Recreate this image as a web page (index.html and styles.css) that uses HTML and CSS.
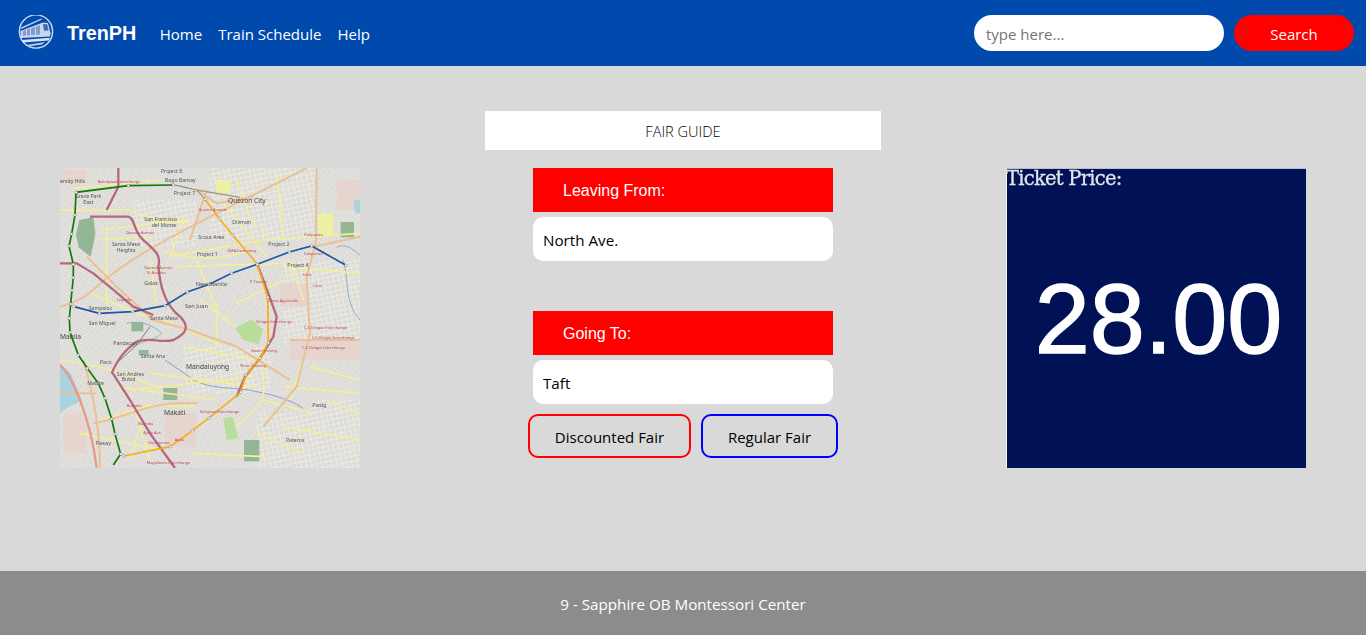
FILE: index.html
```html
<!DOCTYPE html>
<html lang="en">
<head>
<meta charset="utf-8">
<title>TrenPH</title>
<link rel="stylesheet" href="styles.css">
</head>
<body>
<header class="navbar">
  <a class="brand" href="#">
    <svg class="logo" viewBox="0 1.5 36 36" aria-hidden="true">
      <circle cx="18" cy="18" r="16.6" fill="none" stroke="#d5deee" stroke-width="1.4"/>
      <path d="M3 14 L23 5 L24 6 L3.4 15.5Z" fill="#c4d0e6"/>
      <path d="M2.6 17.5 L10 14.5 L25 9 L30 9.6 L32.6 20 L32 23 L3 24.6 Z" fill="#c9d5ea"/>
      <path d="M5 17.5 L8 16.4 V22 L5 22.3Z M9 16 L12 15 V21.7 L9 22Z M13 14.7 L17 13.3 V21.3 L13 21.6Z M18 13 L22 11.6 V21 L18 21.2Z" fill="#7f9dcd"/>
      <path d="M25 10.4 L29.2 10.7 L30.6 17 L26 17.3Z" fill="#3a6bb2"/>
      <path d="M3.6 26.4 L32 24.2 L30.6 27 L5 29Z" fill="#dbe3f1"/>
      <path d="M8 31.5 L27 28.4 L24 31 L11 33Z" fill="#b9c8e2"/>
    </svg>
    <span class="brand-name">TrenPH</span>
  </a>
  <nav class="nav-links">
    <a href="#">Home</a>
    <a href="#">Train Schedule</a>
    <a href="#">Help</a>
  </nav>
  <form class="search">
    <input class="search-input" type="text" placeholder="type here...">
    <button class="search-btn" type="button">Search</button>
  </form>
</header>

<main class="content">
  <h1 class="title">FAIR GUIDE</h1>
  <div class="columns">
    <svg class="map" viewBox="30 24 900 900" role="img" aria-label="Metro Manila train map">
      <defs>
        <pattern id="streets" width="20" height="17" patternUnits="userSpaceOnUse" patternTransform="rotate(24)">
          <rect width="20" height="17" fill="#d8d6d1"/>
          <path d="M0 4H20M0 12.5H20M6 0V17M15 0V17" stroke="#e9e8e4" stroke-width="2.4"/>
        </pattern>
        <pattern id="streets2" width="15" height="15" patternUnits="userSpaceOnUse" patternTransform="rotate(-12)">
          <rect width="15" height="15" fill="#dedcd7"/>
          <path d="M0 7.5H15M7.5 0V15" stroke="#f0efeb" stroke-width="2.2"/>
        </pattern>
      </defs>
      <rect x="30" y="24" width="900" height="900" fill="url(#streets)"/>
      <g class="m-light">
        <path d="M480 24H800V240H480Z"/><path d="M700 300H930V560H700Z"/><path d="M250 120H440V260H250Z"/>
        <path d="M400 560H660V700H400Z"/><path d="M780 720H930V924H780Z"/><path d="M620 760H780V924H620Z"/>
      </g>
      <g class="m-pink">
        <path d="M30 30H110V70H30Z"/><path d="M690 370H770V440H690Z"/><path d="M720 540H930V600H720Z"/>
        <path d="M345 760H440V860H345Z"/><path d="M40 760H110V880H40Z"/><path d="M860 60H930V150H860Z"/>
      </g>
      <g class="m-green">
        <path d="M88 180L130 172L136 222L122 290L86 262L78 224Z"/>
        <path d="M340 684H382V720H340Z"/><path d="M582 840H628V904H582Z"/><path d="M872 186H912V232H872Z"/>
        <path d="M244 486H280V514H244Z"/><path d="M266 570H296V586H266Z"/>
      </g>
      <path class="m-lgreen" d="M555 505L605 478L640 510L625 552L580 540Z"/>
      <path class="m-lgreen" d="M520 775L548 770L565 835L530 840Z"/>
      <path class="m-lime" d="M498 60H540V98H498Z"/>
      <path class="m-lime" d="M805 160H850V225H805Z"/>
      <path class="m-water" d="M30 612L62 640L96 720L50 745L30 760Z"/>
      <path class="m-water" d="M910 120H930V160H915Z"/>
      <path class="m-bluel" d="M860 262C880 250 905 262 930 286M880 300C900 380 880 420 930 480M230 490C270 480 310 495 335 520C320 540 280 540 250 560"/>
      <path class="m-bluel2" d="M345 600L440 665C500 690 560 680 620 695C680 705 730 725 760 745"/>
      <g class="m-yel">
        <path d="M30 150H240C300 180 380 190 420 185M70 85L330 60M340 270C420 305 520 300 600 270"/>
        <path d="M170 200V440M300 300L320 440M440 300L500 450M720 300L760 420M520 130L650 290"/>
        <path d="M30 600C120 610 240 640 330 690M240 690L610 650M150 780L300 735L440 740M450 420L560 500M640 200L640 240"/>
        <path d="M560 800L640 720L790 760M780 620L930 660M830 720L930 760M620 820L760 880M430 880L640 890M240 900L270 800"/>
        <path d="M150 210L410 180M150 240L300 230M360 290L640 240M640 240L930 220M380 320L700 310M700 320L930 340"/>
        <path d="M120 400L290 470M340 480L520 560M500 430L500 560M560 430L700 360M400 560L620 600M300 640L620 680"/>
        <path d="M200 680L500 720M90 820L340 870M260 760L300 900M640 560V720M700 680L930 700M700 800L930 840M760 600L720 720M400 180L360 290M560 60L610 200M680 40L700 230"/>
      </g>
      <g class="m-orange">
        <path d="M30 440C60 430 100 420 140 380C240 290 400 210 560 130C640 90 720 50 770 24"/>
        <path d="M110 290L200 380L310 480L420 510L560 560L720 660M720 540H930"/>
        <path d="M800 24L797 250L770 350L780 520L740 680L640 800"/>
        <path d="M470 90L420 240M930 230L790 260M610 110L500 130L440 90"/>
        <path d="M100 600C130 700 150 800 150 924M30 700L140 700M130 790C240 770 300 720 440 730"/>
      </g>
      <path class="m-salmon" d="M30 615C60 640 120 760 140 924"/>
      <g class="m-road">
        <path d="M30 310H80L130 340L185 385L250 440L310 465"/>
        <path d="M120 170H235C255 175 250 210 275 235C310 270 335 280 325 320C330 370 340 430 390 470C420 500 410 520 370 540C330 550 300 530 260 545C240 560 210 580 185 640"/>
        <path d="M205 24V80L170 150"/>
        <path d="M185 635L240 720L300 820L375 924"/>
        <path d="M622 313L655 400L680 470L670 530L630 595L585 650L560 710"/>
      </g>
      <path class="m-dark" d="M300 500L260 555L205 605M375 75L440 90L465 118"/>
      <path class="m-brown" d="M440 90L570 112"/>
      <path class="ln-green" d="M370 75L235 77L78 97L75 165L65 222L57 258L70 313L70 353L66 391L62 432L58 475L60 517L85 585L112 625L145 670L165 715L185 777L195 822L212 882L190 915"/>
      <path class="ln-blue" d="M72 440L148 460L248 455L345 437L412 396L478 373L545 340L622 313L718 276L785 258L888 316"/>
      <path class="ln-yellow" d="M465 118L508 176L550 227L622 313L653 412L655 548L630 595L588 645L572 697L478 773L427 812L360 860L222 888"/>
      <g class="m-stops">
        <circle cx="370" cy="75" r="4"/><circle cx="235" cy="77" r="4"/><circle cx="78" cy="97" r="4"/><circle cx="75" cy="165" r="4"/><circle cx="65" cy="222" r="4"/><circle cx="57" cy="258" r="4"/><circle cx="70" cy="313" r="4"/><circle cx="70" cy="353" r="4"/><circle cx="66" cy="391" r="4"/><circle cx="62" cy="432" r="4"/><circle cx="58" cy="475" r="4"/><circle cx="60" cy="517" r="4"/><circle cx="85" cy="585" r="4"/><circle cx="112" cy="625" r="4"/><circle cx="145" cy="670" r="4"/><circle cx="165" cy="715" r="4"/><circle cx="185" cy="777" r="4"/><circle cx="195" cy="822" r="4"/><circle cx="212" cy="882" r="4"/>
        <circle cx="72" cy="440" r="4"/><circle cx="148" cy="460" r="4"/><circle cx="248" cy="455" r="4"/><circle cx="345" cy="437" r="4"/><circle cx="412" cy="396" r="4"/><circle cx="478" cy="373" r="4"/><circle cx="545" cy="340" r="4"/><circle cx="622" cy="313" r="4"/><circle cx="718" cy="276" r="4"/><circle cx="785" cy="258" r="4"/><circle cx="888" cy="316" r="4"/>
        <circle cx="465" cy="118" r="4"/><circle cx="508" cy="176" r="4"/><circle cx="550" cy="227" r="4"/><circle cx="653" cy="412" r="4"/><circle cx="655" cy="548" r="4"/><circle cx="630" cy="595" r="4"/><circle cx="588" cy="645" r="4"/><circle cx="572" cy="697" r="4"/><circle cx="478" cy="773" r="4"/><circle cx="427" cy="812" r="4"/><circle cx="360" cy="860" r="4"/><circle cx="222" cy="888" r="4"/>
      </g>
      <g class="m-text">
        <text x="333" y="38">Project 8</text><text x="345" y="67">Bago Bantay</text><text x="372" y="104">Project 7</text>
        <text x="75" y="115">Grace Park</text><text x="100" y="131">East</text><text x="30" y="68">ersity Hills</text>
        <text x="283" y="184">San Francisco</text><text x="305" y="200">del Monte</text>
        <text x="186" y="258">Santa Mesa</text><text x="200" y="276">Heights</text>
        <text x="547" y="192">Diliman</text><text x="445" y="236">Scout Area</text><text x="655" y="258">Project 2</text>
        <text x="440" y="288">Project 1</text><text x="712" y="320">Project 4</text><text x="283" y="374">Galas</text>
        <text x="116" y="451">Sampaloc</text><text x="116" y="494">San Miguel</text><text x="190" y="554">Pandacan</text>
        <text x="150" y="611">Paco</text><text x="200" y="647">San Andres</text><text x="215" y="664">Bukid</text>
        <text x="272" y="595">Santa Ana</text><text x="112" y="674">Malate</text><text x="300" y="480">Santa Mesa</text>
        <text x="708" y="847">Pateros</text><text class="m-mid" x="437" y="378">New Manila</text>
        <text class="m-mid" x="405" y="443">San Juan</text><text class="m-mid" x="137" y="855">Pasay</text><text class="m-mid" x="787" y="741">Pasig</text>
        <text class="m-big" x="534" y="128">Quezon City</text><text class="m-big" x="408" y="626">Mandaluyong</text>
        <text class="m-big" x="342" y="766">Makati</text><text class="m-big" x="30" y="537">Manila</text>
      </g>
      <g class="m-redtext">
        <text x="143" y="68">Balintawak Interchange</text><text x="445" y="154">Quezon Avenue</text><text x="228" y="222">Quezon Avenue</text>
        <text x="532" y="276">GMA-Kamuning</text><text x="282" y="327">Quezon Avenue</text><text x="290" y="341">G. Araneta</text>
        <text x="600" y="368">P. Tuazon</text><text x="655" y="426">Camp Aguinaldo</text><text x="618" y="490">Ortigas Interchange</text>
        <text x="762" y="507">C-5 Ortigas Interchange</text><text x="785" y="536">C-5 Ortigas Interchange</text><text x="756" y="568">C-5 Ortigas Interchange</text>
        <text x="602" y="576">Shaw Crossing</text><text x="570" y="620">Shaw Crossing</text><text x="450" y="760">Kalayaan Interchange</text>
        <text x="230" y="741">Buendia</text><text x="265" y="795">Buendia</text><text x="280" y="822">Ayala Ave.</text><text x="295" y="851">Dasmarinas</text>
        <text x="290" y="912">Magallanes Interchange</text><text x="374" y="842">Ayala</text><text x="200" y="422">Legarda</text>
        <text x="763" y="228">Katipunan</text><text x="763" y="284">Katipunan</text><text x="760" y="347">Libis</text><text x="790" y="382">Libis</text>
      </g>
    </svg>

    <section class="fare-form">
      <label class="field-label">Leaving From:</label>
      <input class="field-input" type="text" value="North Ave.">
      <label class="field-label field-gap">Going To:</label>
      <input class="field-input" type="text" value="Taft">
      <div class="fare-buttons">
        <button class="fare-btn fare-discount" type="button">Discounted Fair</button>
        <button class="fare-btn fare-regular" type="button">Regular Fair</button>
      </div>
    </section>

    <section class="price">
      <div class="price-label">Ticket Price:</div>
      <div class="price-value">28.00</div>
    </section>
  </div>
</main>

<footer class="footer">9 - Sapphire OB Montessori Center</footer>
</body>
</html>
```

FILE: styles.css
```css
* { box-sizing: border-box; }

html, body { height: 100%; }

body {
  margin: 0;
  display: flex;
  flex-direction: column;
  height: 635px;
  overflow: hidden;
  font-family: "Open Sans", "Noto Sans", sans-serif;
  background: #d9d9d9;
}

/* Navbar */
.navbar {
  flex: 0 0 66px;
  display: flex;
  align-items: center;
  padding: 0 12px 0 18px;
  background: #004aad;
}

.brand {
  display: flex;
  align-items: center;
  color: #fff;
  text-decoration: none;
}

.logo { width: 36px; height: 36px; display: block; }

.brand-name {
  margin-left: 13px;
  font: bold 19.8px "Liberation Sans", Arial, sans-serif;
}

.nav-links {
  display: flex;
  gap: 16px;
  margin-left: 23.5px;
  padding-top: 2px;
}

.nav-links a {
  color: #fff;
  font-size: 15px;
  text-decoration: none;
}

.search {
  display: flex;
  gap: 10px;
  margin-left: auto;
}

.search-input {
  width: 250px;
  height: 36px;
  padding: 2px 12px 0;
  border: 0;
  border-radius: 18px;
  background: #fff;
  font: 15px "Open Sans", sans-serif;
  outline: none;
}

.search-input::placeholder { color: #757575; opacity: 1; }

.search-btn {
  width: 120px;
  height: 36px;
  padding: 1px 0 0;
  border: 0;
  border-radius: 18px;
  background: #f00;
  color: #fff;
  font: 15px "Open Sans", sans-serif;
}

/* Main */
.content {
  flex: 1;
  min-height: 0;
  padding-top: 45px;
  background: #d9d9d9;
}

.title {
  width: 396px;
  height: 39px;
  margin: 0 auto 18px;
  background: #fff;
  color: #000;
  font-size: 14.6px;
  font-weight: 300;
  line-height: 41px;
  text-align: center;
}

.columns {
  display: flex;
  justify-content: space-between;
  align-items: flex-start;
  padding: 0 60px;
}

.map {
  display: block;
  width: 300px;
  height: 300px;
  filter: blur(0.4px);
}

.m-light path { fill: url(#streets2); }
.m-pink path { fill: #e6d5cf; }
.m-green path { fill: #93b795; }
.m-lgreen { fill: #b9dd9a; }
.m-lime { fill: #eef0a2; }
.m-water { fill: #a9d3df; }
.m-bluel { fill: none; stroke: #87b3c6; stroke-width: 3; }
.m-bluel2 { fill: none; stroke: #8d9fd0; stroke-width: 3; }
.m-yel path { fill: none; stroke: #f3ee9b; stroke-width: 5; }
.m-orange path { fill: none; stroke: #e9c193; stroke-width: 6; }
.m-salmon { fill: none; stroke: #e89a88; stroke-width: 7; }
.m-road path { fill: none; stroke: #b5697a; stroke-width: 7; }
.m-dark { fill: none; stroke: #7f7f7f; stroke-width: 3; }
.m-brown { fill: none; stroke: #a99a7c; stroke-width: 4; }
.ln-green { fill: none; stroke: #0e7a08; stroke-width: 5; }
.ln-blue { fill: none; stroke: #1c57ac; stroke-width: 5; }
.ln-yellow { fill: none; stroke: #f7ae11; stroke-width: 5; }
.m-stops circle { fill: #fff; stroke: #555; stroke-width: 1.2; }

.m-text text {
  fill: #555;
  font: 15.5px "Noto Sans", sans-serif;
}

.m-text .m-mid { font-size: 17px; }
.m-text .m-big { font-size: 20px; fill: #444; }

.m-redtext text {
  fill: #c2465c;
  font: 11.5px "Noto Sans", sans-serif;
}

/* Fare form */
.fare-form {
  display: flex;
  flex-direction: column;
  width: 300px;
}

.field-label {
  height: 44px;
  padding-left: 30px;
  background: #f00;
  color: #fff;
  font: 16px/45px "Liberation Sans", Arial, sans-serif;
}

.field-gap { margin-top: 50px; }

.field-input {
  width: 100%;
  height: 44px;
  margin-top: 5px;
  padding: 2px 10px 0;
  border: 0;
  border-radius: 10px;
  background: #fff;
  color: #000;
  font: 15.2px "Open Sans", sans-serif;
  outline: none;
}

.fare-buttons {
  display: flex;
  justify-content: center;
  gap: 10px;
  margin: 10px -5px 0;
}

.fare-btn {
  height: 44px;
  padding: 1px 0 0;
  border: 2px solid;
  border-radius: 10px;
  background: transparent;
  color: #000;
  font: 15px "Open Sans", sans-serif;
}

.fare-discount { width: 163px; border-color: #f00; }
.fare-regular { width: 137px; border-color: #00f; }

/* Price panel */
.price {
  position: relative;
  width: 300px;
  height: 300px;
  border-left: 1px solid #f4f5f9;
  border-top: 1px solid #b9bfd2;
  background: #001155;
  color: #fff;
}

.price-label {
  position: absolute;
  top: 0;
  left: -1px;
  color: #e3e5ee;
  font: 19.5px/20px "DejaVu Serif", "Liberation Serif", serif;
  letter-spacing: -0.75px;
  -webkit-text-stroke: 0.3px #e3e5ee;
  filter: blur(0.3px);
}

.price-value {
  display: flex;
  justify-content: center;
  align-items: center;
  height: 100%;
  padding: 0 0 0 4px;
  font: 99px/1 "Liberation Sans", Arial, sans-serif;
  -webkit-text-stroke: 1.4px #fff;
  filter: blur(0.4px);
}

/* Footer */
.footer {
  flex: 0 0 64px;
  min-height: 0;
  background: #8c8c8c;
  color: #fff;
  font-size: 15.2px;
  line-height: 66px;
  text-align: center;
}
```
